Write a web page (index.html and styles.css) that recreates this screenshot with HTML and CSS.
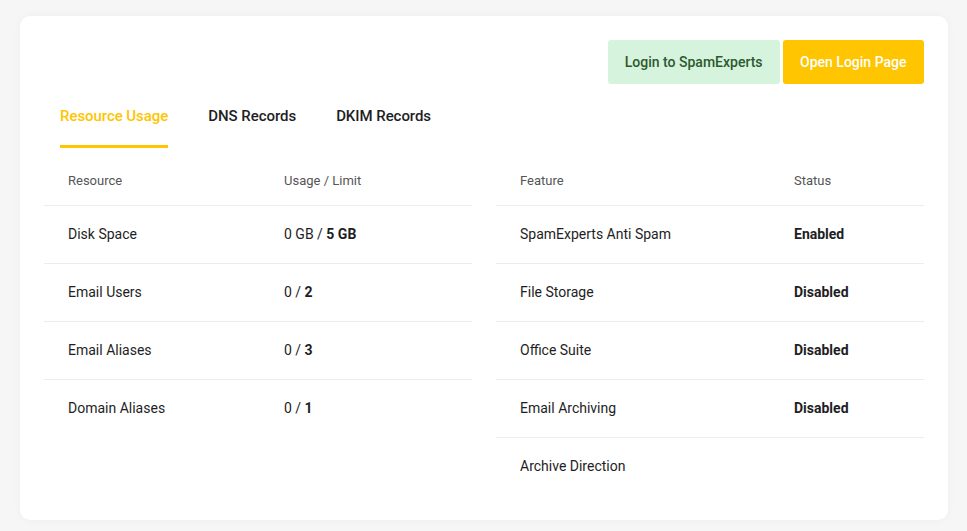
FILE: index.html
```html
<!DOCTYPE html>
<html>
<head>
<meta charset="utf-8">
<link rel="stylesheet" href="styles.css">
</head>
<body>
<div class="card">
  <div class="actions">
    <button class="btn btn-green">Login to SpamExperts</button>
    <button class="btn btn-yellow">Open Login Page</button>
  </div>
  <div class="tabs">
    <div class="tab active">Resource Usage</div>
    <div class="tab">DNS Records</div>
    <div class="tab">DKIM Records</div>
  </div>
  <div class="tables">
    <table class="tbl left">
      <thead><tr><th class="c1">Resource</th><th>Usage / Limit</th></tr></thead>
      <tbody>
        <tr><td class="c1">Disk Space</td><td>0 GB / <b>5 GB</b></td></tr>
        <tr><td class="c1">Email Users</td><td>0 / <b>2</b></td></tr>
        <tr><td class="c1">Email Aliases</td><td>0 / <b>3</b></td></tr>
        <tr><td class="c1">Domain Aliases</td><td>0 / <b>1</b></td></tr>
      </tbody>
    </table>
    <table class="tbl right">
      <thead><tr><th class="c1">Feature</th><th>Status</th></tr></thead>
      <tbody>
        <tr><td class="c1">SpamExperts Anti Spam</td><td><b>Enabled</b></td></tr>
        <tr><td class="c1">File Storage</td><td><b>Disabled</b></td></tr>
        <tr><td class="c1">Office Suite</td><td><b>Disabled</b></td></tr>
        <tr><td class="c1">Email Archiving</td><td><b>Disabled</b></td></tr>
        <tr><td class="c1">Archive Direction</td><td></td></tr>
      </tbody>
    </table>
  </div>
</div>
</body>
</html>
```

FILE: styles.css
```css
* { box-sizing: border-box; }
html, body { margin: 0; padding: 0; }
body {
  background: #f6f6f6;
  font-family: Roboto, "Liberation Sans", sans-serif;
  color: #1e1e24;
  padding: 16px 19px 11px 20px;
}
.card {
  background: #fff;
  border-radius: 10px;
  box-shadow: 0 0 8px rgba(0,0,0,0.04);
  padding: 24px 24px 25px 24px;
}
.actions {
  display: flex;
  justify-content: flex-end;
  gap: 3px;
}
.btn {
  height: 44px;
  border: 0;
  border-radius: 3px;
  font-family: Roboto, "Liberation Sans", sans-serif;
  font-size: 14px;
  font-weight: 500;
  padding: 0 17px;
  cursor: pointer;
}
.btn-green { background: #d6f3dd; color: #2c5a2e; }
.btn-yellow { background: #fec500; color: #fff; padding: 0 17.5px; }
.tabs {
  display: flex;
  gap: 40px;
  padding-left: 16px;
}
.tab {
  font-size: 15px;
  font-weight: 500;
  line-height: 20px;
  letter-spacing: -0.05px;
  padding: 22px 0 19px;
  border-bottom: 3px solid transparent;
  color: #1e1e24;
}
.tab.active { color: #fec500; border-bottom-color: #fec500; }
.tables {
  display: flex;
  gap: 24px;
  margin-top: 8px;
  align-items: flex-start;
}
.tbl {
  flex: 1;
  border-collapse: collapse;
  table-layout: fixed;
}
.tbl th {
  font-size: 13px;
  font-weight: 400;
  color: #555;
  text-align: left;
  height: 49px;
  padding: 0;
  border-bottom: 1px solid #ececec;
}
.tbl td {
  font-size: 14px;
  color: #1e1e24;
  height: 58px;
  padding: 0;
  border-bottom: 1px solid #ececec;
}
.tbl tbody tr:last-child td { border-bottom: 0; }
.tbl .c1 { padding-left: 24px; }
.left .c1 { width: 240px; }
.right .c1 { width: 298px; }
.tbl b { font-weight: 700; }
```
